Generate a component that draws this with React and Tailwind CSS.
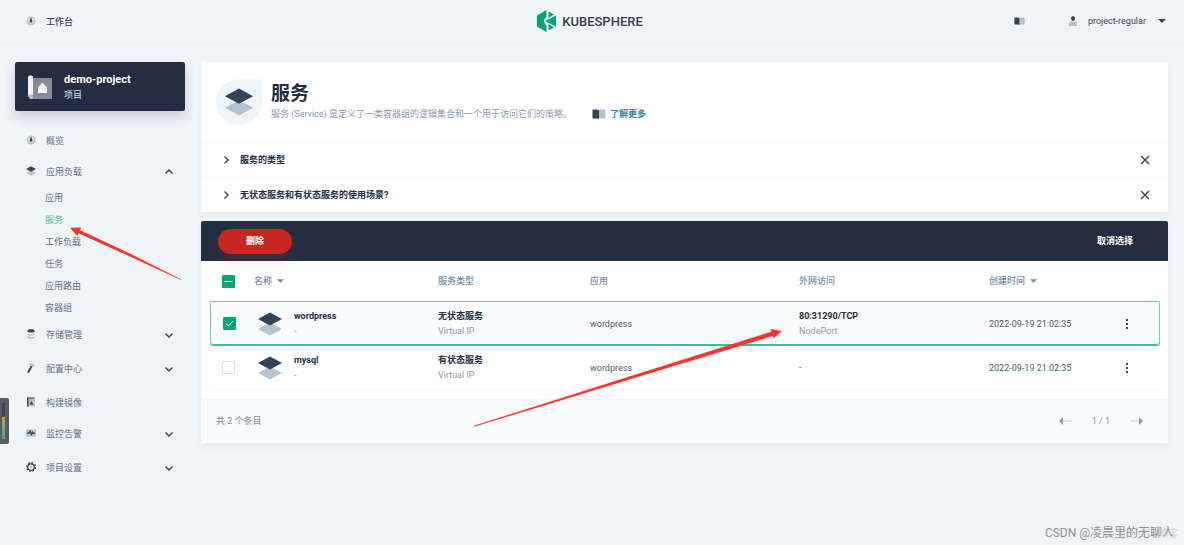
import { useState } from 'react'

const GROUPS = [
  { label: '概览', icon: 'gauge' },
  {
    label: '应用负载',
    icon: 'layers',
    open: true,
    children: ['应用', '服务', '工作负载', '任务', '应用路由', '容器组'],
  },
  { label: '存储管理', icon: 'storage', children: [] },
  { label: '配置中心', icon: 'hammer', children: [] },
  { label: '构建镜像', icon: 'image' },
  { label: '监控告警', icon: 'monitor', children: [] },
  { label: '项目设置', icon: 'gear', children: [] },
]

const TIPS = ['服务的类型', '无状态服务和有状态服务的使用场景?']

const SERVICES = [
  { name: 'wordpress', type: '无状态服务', app: 'wordpress', port: '80:31290/TCP', access: 'NodePort', created: '2022-09-19 21:02:35' },
  { name: 'mysql', type: '有状态服务', app: 'wordpress', created: '2022-09-19 21:02:35' },
]

function Layers({ className }) {
  return (
    <svg viewBox="0 0 24 24" className={className} aria-hidden="true">
      <path d="M12 10.5 24 17 12 23.5 0 17z" fill="#b6c2cd" />
      <path d="M12 .5 24 7 12 13.5 0 7z" fill="#324558" />
    </svg>
  )
}

function Book({ className }) {
  return (
    <svg viewBox="0 0 14 10" className={className} aria-hidden="true">
      <path d="M7 .5h6.500v9H7z" fill="#b6c2cd" />
      <path d="M.5.500H5L7 1.500V10L5.500 9.500H.5z" fill="#324558" />
    </svg>
  )
}

function NavIcon({ name }) {
  if (name === 'layers') return <Layers className="mb-[2px] size-[10px]" />
  return (
    <svg viewBox="0 0 20 20" className="mb-[2px] size-[10px]" aria-hidden="true">
      {name === 'gauge' && (
        <>
          <circle cx="10" cy="10" r="9" fill="#b6c2cd" />
          <circle cx="10" cy="9" r="6" fill="#dfe6ec" />
          <path d="M10 2.500 12.500 9v4h-5V9z" fill="#324558" />
        </>
      )}
      {name === 'storage' && (
        <>
          <path d="M3 14.500c2 2 12 2 14 0V18c-2 2-12 2-14 0z" fill="#b6c2cd" />
          <path d="M3 8c2 2 12 2 14 0v4c-2 2-12 2-14 0z" fill="#c5cfd8" />
          <path d="M3 2.500c0-3 14-3 14 0v3c0 2-14 2-14 0z" fill="#324558" />
        </>
      )}
      {name === 'hammer' && (
        <>
          <path d="M5 2.500C9-.5 16 .5 19 6l-3-.5-3 2.500-3.500-3.500z" fill="#b6c2cd" />
          <path d="M9.500 5.500 13 7 6 20 2 18.500z" fill="#324558" />
        </>
      )}
      {name === 'image' && (
        <>
          <path d="M2 1h16v18H2z" fill="#b6c2cd" />
          <path d="M2 1h15v2H5v16H2z" fill="#324558" />
          <path d="m11 8 4 7H7z" fill="#324558" />
        </>
      )}
      {name === 'monitor' && (
        <>
          <path d="M0 3h20v14H0z" fill="#b6c2cd" />
          <path d="M2 10h4l2-4 3 7 2-5 1.500 2H18" fill="none" stroke="#324558" strokeWidth="2.500" />
        </>
      )}
      {name === 'gear' && (
        <>
          <circle cx="10" cy="10" r="8.500" fill="none" stroke="#324558" strokeWidth="3" strokeDasharray="3.340 3.340" />
          <circle cx="10" cy="10" r="6.500" fill="#eff4f9" stroke="#324558" strokeWidth="2.500" />
          <circle cx="10" cy="10" r="2.500" fill="#b6c2cd" />
        </>
      )}
    </svg>
  )
}

function Chevron({ className }) {
  return (
    <svg viewBox="0 0 10 10" className={className} fill="none" stroke="#324558" strokeWidth="1.400" aria-hidden="true">
      <path d="m1.500 3.500 3.500 3.500 3.500-3.500" />
    </svg>
  )
}

function Caret({ className }) {
  return (
    <svg viewBox="0 0 8 4" className={className} fill="currentColor" aria-hidden="true">
      <path d="M0 0h8L4 4z" />
    </svg>
  )
}

function CheckBox({ label, checked, mixed, onChange }) {
  return (
    <span className="relative block size-[13px]">
      <input
        type="checkbox"
        aria-label={label}
        checked={checked}
        onChange={onChange}
        className="block size-[13px] appearance-none rounded-[1px] border border-[#d8dee5] bg-white checked:border-[#00a971] checked:bg-[#00a971]"
      />
      {checked && (
        <svg viewBox="0 0 13 13" className="pointer-events-none absolute inset-0" fill="none" stroke="#fff" aria-hidden="true">
          <path d={mixed ? 'M2.500 6.500h8' : 'm3 6.500 2.500 2.500L10 4'} />
        </svg>
      )}
    </span>
  )
}

function Header() {
  return (
    <header className="grid h-[45px] grid-cols-3 items-center border-b border-[#e8eef3] px-[18px] text-[#36435c]">
      <a href="#workbench" className="flex items-center gap-[10px] pl-2 font-medium">
        <NavIcon name="gauge" />
        工作台
      </a>
      <a href="#home" className="flex items-center justify-center gap-[5px] pr-1 pb-[2px]">
        <svg viewBox="0 0 20 22" className="h-[22px] w-5" fill="#00a971" aria-hidden="true">
          <path d="M9.500 0v6L7 10.200v1.600L9.500 16v6L0 16.500v-11z" />
          <path d="M11.500 1.500 17 4.500l-5.500 3.500z" />
          <path d="M19 5.500v11L8 11z" />
          <path d="m11.500 14 5.500 3.500-5.500 3z" />
        </svg>
        <span className="text-[13px] leading-none font-medium text-[#3b3a4f]">KUBESPHERE</span>
      </a>
      <div className="flex items-center justify-end pb-[2px]">
        <a href="#docs" aria-label="文档" className="mr-11"><Book className="h-2 w-[11px]" /></a>
        <button type="button" className="flex items-center">
          <svg viewBox="0 0 16 20" className="mr-[11px] h-[10px] w-2" aria-hidden="true">
            <path d="M0 20v-5c0-3 2-4 4-4h8c2 0 4 1 4 4v5z" fill="#b6c2cd" />
            <path d="M4 4c0-5 8-5 8 0 0 3-1 6-4 6S4 7 4 4z" fill="#324558" />
          </svg>
          project-regular
          <Caret className="ml-3 h-1 w-2 text-[#324558]" />
        </button>
      </div>
    </header>
  )
}

function Sidebar() {
  const [active, setActive] = useState('服务')

  return (
    <aside className="w-[170px] shrink-0">
      <div className="flex h-[49px] items-center gap-3 rounded-xs bg-[#242e42] pl-[13px] text-white shadow-[0_6px_12px_rgba(36,46,66,0.2)]">
        <svg viewBox="0 0 24 24" className="size-6" aria-hidden="true">
          <path d="M4 3h20v21H2z" fill="#858c99" />
          <path d="M0 2c0-2 5-2 5 0v18H2.500L0 22z" fill="#f1f3f5" />
          <path d="M0 21c0-2 5-2 5 0v3H2z" fill="#b9bec6" />
          <path d="m14.500 7.500 4.500 5V18h-9v-5.500z" fill="#f1f3f5" />
        </svg>
        <div>
          <div className="text-[11px] leading-4 font-bold">demo-project</div>
          <div className="leading-[14px] text-[#dfe4eb]">项目</div>
        </div>
      </div>

      <nav className="mt-[14px] text-[#5f708a]">
        {GROUPS.map((g) => (
          <div key={g.label} className={g.children && !g.open ? 'mb-[3px]' : ''}>
            <button type="button" className="flex h-[31px] w-full items-center gap-[10px] px-[11px]">
              <NavIcon name={g.icon} />
              <span className="flex-1 text-left">{g.label}</span>
              {g.children && <Chevron className={g.open ? 'size-[10px] rotate-180' : 'size-[10px]'} />}
            </button>
            {g.open && g.children.map((c) => (
              <a
                key={c}
                href="#nav"
                onClick={() => setActive(c)}
                className={`block h-[22px] pl-[30px] leading-[22px] ${active === c ? 'text-[#55bc8a]' : ''}`}
              >
                {c}
              </a>
            ))}
          </div>
        ))}
      </nav>
    </aside>
  )
}

function Banner() {
  return (
    <section className="rounded-xs bg-white shadow-[0_3px_6px_rgba(36,46,66,0.06)]">
      <div className="flex h-20 items-center gap-[9px] pl-[15px]">
        <div className="flex size-[46px] items-center justify-center rounded-full rounded-tr-none bg-[#eff4f9]">
          <Layers className="size-7" />
        </div>
        <div>
          <h1 className="text-[19px] leading-6 font-bold text-[#242e42]">服务</h1>
          <p className="flex items-center leading-4 text-[#8c96ad]">
            服务 (Service) 是定义了一类容器组的逻辑集合和一个用于访问它们的策略。
            <a href="#more" className="ml-5 flex items-center gap-1 font-bold text-[#3385b0]">
              <Book className="h-[10px] w-[14px]" />
              了解更多
            </a>
          </p>
        </div>
      </div>
      {TIPS.map((t) => (
        <div key={t} className="flex h-[35px] items-center border-t border-[#eff2f7] pr-[18px] pl-5 font-bold text-[#242e42]">
          <button type="button" className="flex flex-1 items-center gap-[9px] text-left">
            <Chevron className="size-[10px] -rotate-90" />
            {t}
          </button>
          <button type="button" aria-label="关闭">
            <svg viewBox="0 0 10 10" className="size-[10px]" stroke="#324558" strokeWidth="1.400" aria-hidden="true">
              <path d="m1 1 8 8M9 1 1 9" />
            </svg>
          </button>
        </div>
      ))}
    </section>
  )
}

function ServiceTable() {
  const [selected, setSelected] = useState(['wordpress'])

  const toggle = (name) =>
    setSelected((s) => (s.includes(name) ? s.filter((x) => x !== name) : [...s, name]))
  const toggleAll = () => setSelected((s) => (s.length ? [] : SERVICES.map((x) => x.name)))

  return (
    <section className="mt-[9px] overflow-hidden rounded-xs bg-white shadow-[0_3px_6px_rgba(36,46,66,0.06)]">
      <div className="flex h-10 items-center justify-between bg-[#242e42] pr-[35px] pl-[17px] font-bold text-white">
        <button type="button" className="h-[25px] w-[74px] rounded-full bg-[#ca2621] shadow-[0_6px_12px_rgba(202,38,33,0.2)]">删除</button>
        <button type="button" onClick={() => setSelected([])}>取消选择</button>
      </div>

      <div className="px-[9px] pb-[9px]">
        <table className="w-full table-fixed border-separate border-spacing-0 text-left text-[#4a5974]">
          <colgroup>
            <col className="w-[36px]" />
            <col className="w-[184px]" />
            <col className="w-[152px]" />
            <col className="w-[209px]" />
            <col className="w-[190px]" />
            <col className="w-[132px]" />
            <col className="w-[47px]" />
          </colgroup>
          <thead>
            <tr className="h-10 text-[#79879c] [&>th]:px-2 [&>th]:font-medium">
              <th className="pl-3!">
                <CheckBox
                  label="全选"
                  checked={selected.length > 0}
                  mixed={selected.length < SERVICES.length}
                  onChange={toggleAll}
                />
              </th>
              <th><span className="flex items-center gap-[5px]">名称 <Caret className="h-1 w-[7px]" /></span></th>
              <th>服务类型</th>
              <th>应用</th>
              <th>外网访问</th>
              <th><span className="flex items-center gap-[5px]">创建时间 <Caret className="h-1 w-[7px]" /></span></th>
              <th />
            </tr>
          </thead>
          <tbody>
            {SERVICES.map((s) => {
              const on = selected.includes(s.name)
              return (
                <tr
                  key={s.name}
                  className={on
                    ? 'h-[45px] bg-[#f9fbfd] [&>td]:border-y [&>td]:border-[#6fcfab] [&>td]:border-b-[#43bd91] [&>td]:px-2 [&>td]:shadow-[inset_0_-1px_0_#43bd91] [&>td:first-child]:rounded-l-xs [&>td:first-child]:border-l [&>td:last-child]:rounded-r-xs [&>td:last-child]:border-r'
                    : 'h-11 [&>td]:border-b [&>td]:border-[#f5f7fa] [&>td]:px-2'}
                >
                  <td className="pl-3!">
                    <CheckBox label={s.name} checked={on} onChange={() => toggle(s.name)} />
                  </td>
                  <td>
                    <div className="flex items-center gap-3 pl-1">
                      <Layers className="size-6" />
                      <div className="leading-[15px]">
                        <a href="#service" className="font-bold text-[#242e42]">{s.name}</a>
                        <div className="text-[#8c96ad]">-</div>
                      </div>
                    </div>
                  </td>
                  <td className="leading-[15px]">
                    <div className="font-bold text-[#242e42]">{s.type}</div>
                    <div className="text-[#8c96ad]">Virtual IP</div>
                  </td>
                  <td>{s.app}</td>
                  <td className="leading-[15px]">
                    {s.port ? (
                      <>
                        <div className="font-bold text-[#242e42]">{s.port}</div>
                        <div className="text-[#8c96ad]">{s.access}</div>
                      </>
                    ) : '-'}
                  </td>
                  <td>{s.created}</td>
                  <td>
                    <button type="button" aria-label="更多操作" className="block p-1">
                      <svg viewBox="0 0 4 10" className="h-[10px] w-1" fill="#324558" aria-hidden="true">
                        <path d="M1 0h2v2H1zM1 4h2v2H1zM1 8h2v2H1z" />
                      </svg>
                    </button>
                  </td>
                </tr>
              )
            })}
          </tbody>
        </table>
      </div>

      <footer className="flex h-11 items-center justify-between border-t border-[#eff2f7] bg-[#f9fbfd] pr-6 pb-[2px] pl-[15px] text-[#79879c]">
        <span>共 2 个条目</span>
        <div className="flex items-center gap-5">
          <button type="button" aria-label="上一页">
            <svg viewBox="0 0 14 8" className="h-2 w-[14px]" aria-hidden="true">
              <path d="M4 3.500h10v1H4z" fill="#c1c9d1" />
              <path d="M5 0v8L1 4z" fill="#8f9bab" />
            </svg>
          </button>
          <span>1 / 1</span>
          <button type="button" aria-label="下一页">
            <svg viewBox="0 0 14 8" className="h-2 w-[14px]" aria-hidden="true">
              <path d="M0 3.500h10v1H0z" fill="#c1c9d1" />
              <path d="M9 0v8l4-4z" fill="#8f9bab" />
            </svg>
          </button>
        </div>
      </footer>
    </section>
  )
}

export default function App() {
  return (
    <div className="relative min-h-screen overflow-hidden bg-[#eff4f9] font-['Roboto','Noto_Sans_CJK_SC',sans-serif] text-[9px] leading-4">
      <Header />
      <div className="flex gap-4 pt-[17px] pr-4 pl-[15px]">
        <Sidebar />
        <main className="min-w-0 flex-1">
          <Banner />
          <ServiceTable />
        </main>
      </div>

      {/* level meter docked to the window edge */}
      <div className="absolute top-[398px] left-0 flex h-[46px] w-[9px] items-center rounded-r-xs bg-[#5a5966] pl-[2px]">
        <div className="flex h-9 w-[3px] flex-col justify-end bg-[#414352]">
          <div className="h-[22px] bg-linear-to-b from-[#b5a847] to-[#3aa68c]" />
        </div>
      </div>

      {/* annotation arrows */}
      <svg viewBox="0 0 112 54" className="pointer-events-none absolute top-[227px] left-[70px] h-[54px] w-[112px]" fill="#fd3532" aria-hidden="true">
        <path d="M0 .7 11 .5 10.300 3.200 60 26.500 111 52.300V53L60 29.500 8.500 6.300 7.300 9z" />
      </svg>
      <svg viewBox="0 0 310 100" className="pointer-events-none absolute top-[328px] left-[473px] h-[100px] w-[310px]" fill="#fd3532" aria-hidden="true">
        <path d="M309 3 297.700 1 298 3.700 150 50.500 1 97.800V98.700L150 53.500 299.700 8 300.700 10.300z" />
      </svg>

      {/* watermarks */}
      <div className="absolute right-[6px] bottom-[3px] text-[10px] leading-4 text-[#d3d8dd]">@51CTO博客</div>
      <div className="absolute right-[10px] bottom-[3px] text-[12px] leading-[18px] text-[#8e9399]">
        CSDN @凌晨里的无聊人
      </div>
    </div>
  )
}
